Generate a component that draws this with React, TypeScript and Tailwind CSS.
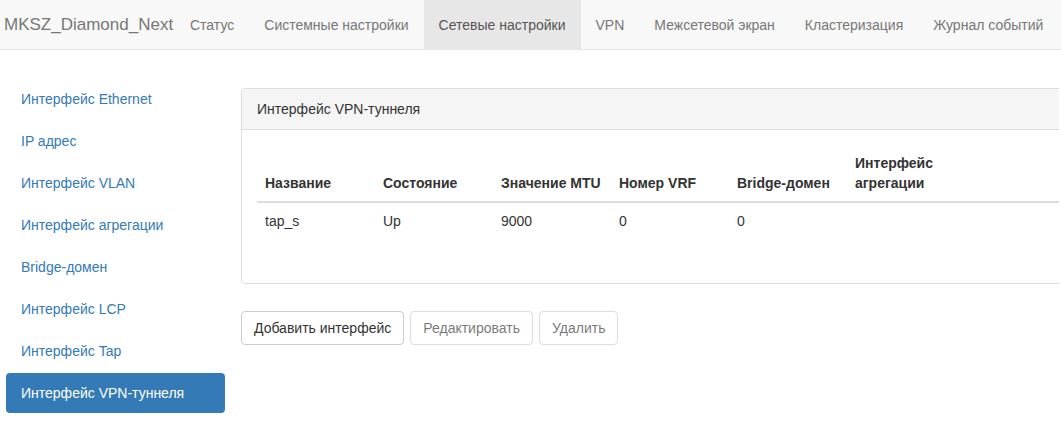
const navItems = [
  "Статус",
  "Системные настройки",
  "Сетевые настройки",
  "VPN",
  "Межсетевой экран",
  "Кластеризация",
  "Журнал событий",
];

const sideItems = [
  "Интерфейс Ethernet",
  "IP адрес",
  "Интерфейс VLAN",
  "Интерфейс агрегации",
  "Bridge-домен",
  "Интерфейс LCP",
  "Интерфейс Tap",
  "Интерфейс VPN-туннеля",
];

const columns = [
  "Название",
  "Состояние",
  "Значение MTU",
  "Номер VRF",
  "Bridge-домен",
  "Интерфейс агрегации",
];

const rows = [["tap_s", "Up", "9000", "0", "0", ""]];

export default function App() {
  const active = "Сетевые настройки";
  const activeSide = "Интерфейс VPN-туннеля";

  return (
    <div
      className="w-[1061px] h-[442px] overflow-hidden bg-white text-[14px] leading-[20px] text-[#333]"
      style={{ fontFamily: '"Liberation Sans", Arial, sans-serif' }}>
      <nav className="h-[50px] bg-[#f8f8f8] border-b border-[#e7e7e7] flex items-stretch">
        <div className="w-[175px] pl-[4px] flex items-center text-[17px] text-[#777] whitespace-nowrap">
          MKSZ_Diamond_Next
        </div>
        {navItems.map((item) => (
          <a
            key={item}
            className={
              item === active
                ? "px-[15px] flex items-center bg-[#e7e7e7] text-[#555] whitespace-nowrap"
                : "px-[15px] flex items-center text-[#777] whitespace-nowrap"
            }>
            {item}
          </a>
        ))}
      </nav>

      <div className="flex">
        <ul className="w-[225px] shrink-0 pl-[6px] pt-[29px] flex flex-col gap-[2px]">
          {sideItems.map((item) => (
            <li
              key={item}
              className={
                item === activeSide
                  ? "h-[40px] px-[15px] flex items-center rounded-[4px] bg-[#337ab7] text-white whitespace-nowrap"
                  : "h-[40px] px-[15px] flex items-center text-[#337ab7] whitespace-nowrap"
              }>
              {item}
            </li>
          ))}
        </ul>

        <div className="ml-[16px] w-[818px] overflow-hidden pt-[38px]">
          <div className="w-[860px] border border-[#ddd] rounded-[4px]">
            <div className="h-[41px] px-[15px] flex items-center bg-[#f5f5f5] border-b border-[#ddd] rounded-t-[4px]">
              Интерфейс VPN-туннеля
            </div>
            <div className="px-[15px] pt-[15px] pb-[44px]">
              <table className="w-full border-collapse">
                <thead>
                  <tr>
                    {columns.map((c, i) => (
                      <th
                        key={c}
                        className={
                          i < 5
                            ? "w-[118px] p-[8px] text-left align-bottom font-bold border-b-2 border-[#ddd]"
                            : "w-[180px] p-[8px] text-left align-bottom font-bold border-b-2 border-[#ddd]"
                        }>
                        {i === 5 ? (
                          <>
                            Интерфейс
                            <br />
                            агрегации
                          </>
                        ) : (
                          c
                        )}
                      </th>
                    ))}
                    <th className="border-b-2 border-[#ddd]"></th>
                  </tr>
                </thead>
                <tbody>
                  {rows.map((r) => (
                    <tr key={r[0]}>
                      {r.map((v, i) => (
                        <td key={i} className="p-[8px] text-left">
                          {v}
                        </td>
                      ))}
                      <td></td>
                    </tr>
                  ))}
                </tbody>
              </table>
            </div>
          </div>

          <div className="mt-[27px] flex">
            <button className="h-[34px] px-[12px] border border-[#ccc] rounded-[4px] bg-white text-[#333]">
              Добавить интерфейс
            </button>
            <button className="ml-[6px] h-[34px] px-[12px] border border-[#ccc] rounded-[4px] bg-white text-[#333] opacity-[0.65]">
              Редактировать
            </button>
            <button className="ml-[6px] h-[34px] px-[12px] border border-[#ccc] rounded-[4px] bg-white text-[#333] opacity-[0.65]">
              Удалить
            </button>
          </div>
        </div>
      </div>
    </div>
  );
}
